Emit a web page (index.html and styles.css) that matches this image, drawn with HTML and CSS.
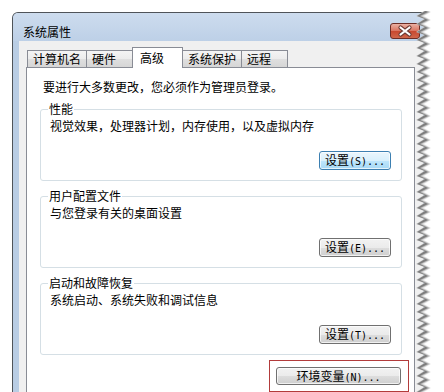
FILE: index.html
```html
<!DOCTYPE html>
<html lang="zh-CN">
<head>
    <meta charset="UTF-8">
    <meta name="viewport" content="width=device-width, initial-scale=1.0">
    <title>系统属性</title>
    <link rel="stylesheet" href="styles.css">
</head>
<body>
    <div class="window">
        <div class="titlebar">
            <span class="title">系统属性</span>
            <span class="close">
                <svg width="28" height="14" viewBox="0 0 28 14">
                    <path d="M9.5 3.5 L18.5 10.5 M18.5 3.5 L9.5 10.5" stroke="#6e3a33" stroke-width="4.2" stroke-linecap="round"/>
                    <path d="M9.5 3.5 L18.5 10.5 M18.5 3.5 L9.5 10.5" stroke="#ffffff" stroke-width="2.2" stroke-linecap="round"/>
                </svg>
            </span>
        </div>
        <div class="frame">
            <div class="client">
                <div class="tabs">
                    <span class="tab">计算机名</span>
                    <span class="tab">硬件</span>
                    <span class="tab active">高级</span>
                    <span class="tab">系统保护</span>
                    <span class="tab">远程</span>
                </div>
                <div class="panel">
                    <p class="note">要进行大多数更改，您必须作为管理员登录。</p>

                    <fieldset class="group">
                        <legend>性能</legend>
                        <p class="desc">视觉效果，处理器计划，内存使用，以及虚拟内存</p>
                        <div class="actions">
                            <button class="btn focused">设置<span class="key">(S)...</span></button>
                        </div>
                    </fieldset>

                    <fieldset class="group">
                        <legend>用户配置文件</legend>
                        <p class="desc">与您登录有关的桌面设置</p>
                        <div class="actions">
                            <button class="btn">设置<span class="key">(E)...</span></button>
                        </div>
                    </fieldset>

                    <fieldset class="group">
                        <legend>启动和故障恢复</legend>
                        <p class="desc">系统启动、系统失败和调试信息</p>
                        <div class="actions">
                            <button class="btn">设置<span class="key">(T)...</span></button>
                        </div>
                    </fieldset>

                    <div class="footer">
                        <div class="mark">
                            <button class="btn wide">环境变量<span class="key">(N)...</span></button>
                        </div>
                    </div>
                </div>
            </div>
        </div>
    </div>

    <!-- torn paper edge on the right -->
    <svg class="tear" width="32" height="392" viewBox="0 0 32 392">
        <defs>
            <pattern id="zig" width="32" height="8" patternUnits="userSpaceOnUse">
                <polygon points="4,0 12,3 4,8 32,8 32,0" fill="#c8c8c8"/>
                <polygon points="5,0 13,3 5,8 32,8 32,0" fill="#7d7d7d"/>
                <polygon points="8,0 16,4 8,8 32,8 32,0" fill="#bcbcbc"/>
                <polygon points="10,0 18,4 10,8 32,8 32,0" fill="#e8e8e8"/>
                <polygon points="12,0 19,4 12,8 32,8 32,0" fill="#ffffff"/>
            </pattern>
        </defs>
        <rect x="0" y="11" width="32" height="381" fill="url(#zig)"/>
    </svg>
</body>
</html>
```

FILE: styles.css
```css
body {
    margin: 0;
    width: 444px;
    height: 392px;
    overflow: hidden;
    position: relative;
    background: #fff;
    font-family: "Noto Sans CJK SC", "Liberation Sans", sans-serif;
    font-size: 12px;
    color: #000;
}
.window {
    box-sizing: border-box;
    width: 418px;
    height: 380px;
    margin: 12px 0 0 12px;
    border: 1px solid #4f5459;
    border-bottom: none;
    border-radius: 6px 6px 0 0;
    background: #b9cde4;
}
.titlebar {
    display: flex;
    align-items: flex-start;
    height: 28px;
    padding: 0 9px 0 10px;
    border-radius: 5px 5px 0 0;
    background: linear-gradient(#cddcee, #bdd0e7);
}
.title {
    padding-top: 11px;
    line-height: 16px;
}
.close {
    display: flex;
    align-items: center;
    justify-content: center;
    box-sizing: border-box;
    width: 30px;
    height: 16px;
    margin: 10px 0 0 auto;
    border: 1px solid #6d2d26;
    border-radius: 3px;
    background: linear-gradient(#eab0a3, #d9735f 50%, #c8482f 51%, #d0664a);
}
.frame {
    padding: 0 6px;
}
.client {
    box-sizing: border-box;
    height: 351px;
    padding: 6px 0 0 7px;
    background: #f0f0f0;
}
.tabs {
    display: flex;
    align-items: flex-end;
    height: 20px;
    padding-left: 1px;
}
.tab {
    box-sizing: border-box;
    min-width: 47px;
    height: 17px;
    padding: 0 5px;
    margin-right: -1px;
    line-height: 16px;
    border: 1px solid #898c95;
    border-bottom: none;
    background: linear-gradient(#f4f4f4, #ececec 50%, #dfdfdf 51%, #d6d6d6);
}
.tab.active {
    position: relative;
    z-index: 1;
    min-width: 51px;
    height: 21px;
    margin-bottom: -1px;
    padding-left: 7px;
    padding-top: 2px;
    background: #fff;
}
.panel {
    box-sizing: border-box;
    width: 389px;
    height: 325px;
    padding: 11px 12px 0 13px;
    border: 1px solid #898c95;
    border-bottom: none;
    background: #fff;
}
.note {
    margin: 0 0 0 3px;
    line-height: 16px;
}
.group {
    margin: 8px 0 0;
    padding: 0 10px 10px 9px;
    border: 1px solid #d5dfe5;
    border-radius: 3px;
}
.panel .note + .group {
    margin-top: 7px;
}
.group legend {
    padding: 0 1px;
    margin-left: -2px;
    line-height: 14px;
}
.desc {
    margin: 2px 0 0;
    line-height: 16px;
}
.actions {
    display: flex;
    justify-content: flex-end;
    margin-top: 17px;
}
.btn {
    box-sizing: border-box;
    width: 72px;
    height: 19px;
    padding: 0;
    font-family: inherit;
    font-size: 12px;
    line-height: 16px;
    color: #000;
    border: 1px solid #707070;
    border-radius: 3px;
    background: linear-gradient(#f2f2f2, #ebebeb 50%, #dddddd 51%, #cfcfcf);
    box-shadow: inset 0 0 0 1px rgba(255, 255, 255, 0.7);
}
.btn.focused {
    border-color: #3c7fb1;
    background: linear-gradient(#eaf6fd, #d9f0fc 50%, #bee6fd 51%, #a7d9f5);
}
.btn.wide {
    width: 125px;
    height: 18px;
}
.key {
    font-family: "DejaVu Sans Mono", monospace;
    font-size: 10px;
}
.footer {
    display: flex;
    justify-content: flex-end;
    margin: 5px -7px 0 0;
}
.mark {
    display: flex;
    padding: 6px 7px 6px 6px;
    border: 1px solid #b23b3b;
}
.tear {
    position: absolute;
    top: 0;
    right: 0;
}
```
